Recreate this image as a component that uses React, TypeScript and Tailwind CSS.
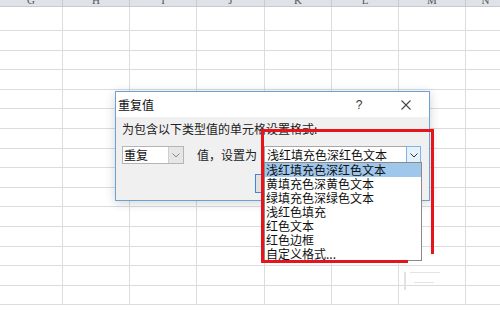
const COLS = [63, 67, 67, 68, 67, 67, 67, 40]
const LETTERS = ['G', 'H', 'I', 'J', 'K', 'L', 'M', 'N']
const ROWS = 15

const OPTIONS = [
  '浅红填充色深红色文本',
  '黄填充色深黄色文本',
  '绿填充色深绿色文本',
  '浅红色填充',
  '红色文本',
  '红色边框',
  '自定义格式...',
]

const cjk = { fontFamily: '"Noto Sans CJK SC", "Noto Sans", sans-serif' }

function Chevron({ className = '' }: { className?: string }) {
  return (
    <svg className={className} width="8" height="5" viewBox="0 0 8 5" fill="none" stroke="currentColor" strokeWidth={1}>
      <path d="M0.5 0.5L4 4L7.5 0.5" />
    </svg>
  )
}

export default function App() {
  return (
    <div className="relative w-[500px] h-[319px] overflow-hidden bg-white" style={cjk}>
      {/* Sheet: column header */}
      <div className="flex h-[7px] overflow-hidden bg-[#dfe3e8] border-b border-[#c6cbd2]">
        {COLS.map((w, i) => (
          <div
            key={i}
            style={{ width: w }}
            className="shrink-0 border-r border-[#c6cbd2] flex justify-center"
          >
            <span className="text-[11px] leading-[11px] -mt-[5px] text-[#555]" style={{ fontFamily: '"Liberation Serif", serif' }}>
              {LETTERS[i]}
            </span>
          </div>
        ))}
      </div>

      {/* Sheet: cells */}
      <div className="flex flex-col">
        {Array.from({ length: ROWS }).map((_, r) => (
          <div key={r} className={`flex border-b border-[#dadcdf] ${r === 0 ? 'h-[24px]' : 'h-[19.6px]'}`}>
            {COLS.map((w, i) => (
              <div key={i} style={{ width: w }} className="shrink-0 border-r border-[#dadcdf]" />
            ))}
          </div>
        ))}
      </div>

      {/* Dialog */}
      <div className="absolute left-[115px] top-[91px] w-[315px] h-[110px] border border-[#6aa2d8] bg-[#f0f0f0] shadow-[0_2px_10px_rgba(0,0,0,0.18)] flex flex-col">
        {/* Title bar */}
        <div className="h-[25px] bg-white flex items-center pl-[2px] shrink-0">
          <span className="text-[12px] text-[#111] flex-1">重复值</span>
          <span className="text-[12px] text-[#333] w-[14px] text-center mr-[35px]" style={{ fontFamily: '"Liberation Sans", sans-serif' }}>?</span>
          <svg className="mr-[18px] text-[#444]" width="10" height="10" viewBox="0 0 10 10" stroke="currentColor" strokeWidth={1.1}>
            <path d="M0.5 0.5L9.5 9.5M9.5 0.5L0.5 9.5" />
          </svg>
        </div>

        {/* Body */}
        <div className="flex-1 px-[6px] pt-[4px]">
          <p className="text-[12px] leading-[16px] text-[#222]">为包含以下类型值的单元格设置格式:</p>
          <div className="flex items-center mt-[9px] h-[18px]">
            <div className="flex w-[62px] h-[18px] border border-[#b5b5b5] bg-white">
              <span className="flex-1 text-[12px] leading-[16px] pl-[1px] text-[#111]">重复</span>
              <div className="w-[15px] bg-[#e6e6e6] border-l border-[#cfcfcf] flex items-center justify-center text-[#888]">
                <Chevron />
              </div>
            </div>
            <span className="text-[12px] text-[#222] ml-[13px]">值，设置为</span>
            <div className="ml-[7px] flex w-[157px] h-[18px] border border-[#a8a8a8] bg-white">
              <span className="flex-1 text-[12px] leading-[16px] pl-[2px] text-[#111]">浅红填充色深红色文本</span>
              <div className="w-[15px] bg-[#e5f1fb] border border-[#7eb4ea] -my-px -mr-px flex items-center justify-center text-[#333]">
                <Chevron />
              </div>
            </div>
          </div>
          {/* OK button, mostly hidden behind list */}
          <div className="mt-[10px] ml-[133px] w-[40px] h-[19px] border border-[#3b88d8] bg-[#e1e1e1]" />
        </div>
      </div>

      {/* Dropdown list */}
      <div className="absolute left-[264px] top-[162px] w-[158px] h-[99px] bg-white border border-[#8a8a8a] flex flex-col">
        {OPTIONS.map((o, i) => (
          <div
            key={o}
            className={`h-[14px] overflow-hidden flex items-center pl-[1px] ${i === 0 ? 'bg-[#9fc7ec]' : ''}`}
          >
            <span className="text-[12px] leading-[13px] text-[#111]">{o}</span>
          </div>
        ))}
      </div>

      {/* Red hand-drawn annotation */}
      <div className="absolute left-[261px] top-[129px] w-[173px] h-[3px] bg-[#e8141c]" />
      <div className="absolute left-[261px] top-[129px] w-[3px] h-[134px] bg-[#e8141c]" />
      <div className="absolute left-[431px] top-[129px] w-[3px] h-[125px] bg-[#e8141c]" />
      <div className="absolute left-[261px] top-[260px] w-[147px] h-[3px] bg-[#e8141c]" />

      {/* faint watermark strokes */}
      <div className="absolute left-[404px] top-[272px] w-[2px] h-[18px] bg-[#e2e2e2]" />
      <div className="absolute left-[410px] top-[272px] w-[30px] h-px bg-[#e4e4e4]" />
      <div className="absolute left-[414px] top-[282px] w-[20px] h-px bg-[#e4e4e4]" />
    </div>
  )
}
